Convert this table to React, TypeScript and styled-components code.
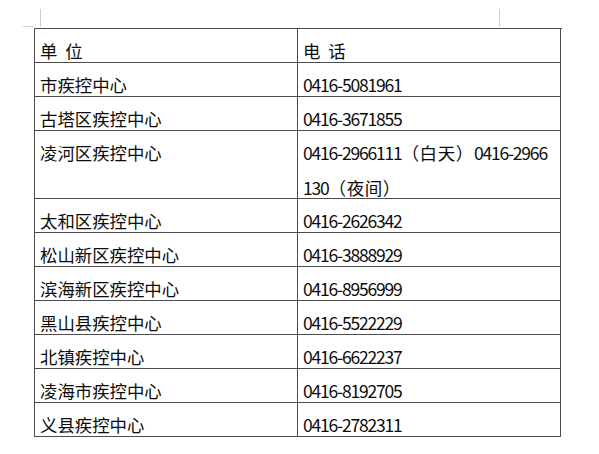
import { Fragment } from 'react';
import styled, { createGlobalStyle } from 'styled-components';

const GlobalStyle = createGlobalStyle`
  html, body {
    margin: 0;
    padding: 0;
    background: #ffffff;
  }
  body {
    font-family: "Noto Sans CJK SC", "Noto Sans", sans-serif;
    color: #0c0c0c;
  }
`;

const Page = styled.div`
  position: relative;
  width: 599px;
  height: 454px;
  padding: 28px 0 0 34px;
  box-sizing: border-box;
`;

const CropMark = styled.div<{ $vertical?: boolean }>`
  position: absolute;
  background: #cfcfcf;
  width: ${(p) => (p.$vertical ? '1px' : '11px')};
  height: ${(p) => (p.$vertical ? '18px' : '1px')};
`;

const Table = styled.div`
  display: grid;
  grid-template-columns: 263px 263px;
  width: 527px;
  border-top: 1px solid #4d4d4d;
  border-left: 1px solid #4d4d4d;
`;

const Cell = styled.div<{ $lines: number; $phone?: boolean }>`
  box-sizing: border-box;
  height: ${(p) => p.$lines * 34}px;
  padding: 4px 5px 0 5px;
  border-right: 1px solid #4d4d4d;
  border-bottom: 1px solid #4d4d4d;
  font-size: ${(p) => (p.$phone ? '17.5px' : '17.4px')};
  letter-spacing: ${(p) => (p.$phone ? '-1.2px' : '0')};
  line-height: 35px;
  white-space: nowrap;
`;

const HeaderText = styled.span`
  word-spacing: 4px;
  letter-spacing: 0;
`;

const Wide = styled.span`
  letter-spacing: 0.6px;
`;

const Line = styled.div``;

interface Row {
  unit: string;
  phone: string[];
}

const rows: Row[] = [
  { unit: '市疾控中心', phone: ['0416-5081961'] },
  { unit: '古塔区疾控中心', phone: ['0416-3671855'] },
  { unit: '凌河区疾控中心', phone: ['0416-2966111（白天）0416-2966', '130（夜间）'] },
  { unit: '太和区疾控中心', phone: ['0416-2626342'] },
  { unit: '松山新区疾控中心', phone: ['0416-3888929'] },
  { unit: '滨海新区疾控中心', phone: ['0416-8956999'] },
  { unit: '黑山县疾控中心', phone: ['0416-5522229'] },
  { unit: '北镇疾控中心', phone: ['0416-6622237'] },
  { unit: '凌海市疾控中心', phone: ['0416-8192705'] },
  { unit: '义县疾控中心', phone: ['0416-2782311'] },
];

// wide (CJK) runs keep their natural width, digit runs are tightened
const renderPhone = (text: string) =>
  text.split(/([（）\u4e00-\u9fff]+)/).map((part, i) =>
    /[（）\u4e00-\u9fff]/.test(part) ? <Wide key={i}>{part}</Wide> : part
  );

export default function App() {
  return (
    <>
      <GlobalStyle />
      <Page>
        <CropMark $vertical style={{ left: 40, top: 9 }} />
        <CropMark style={{ left: 23, top: 26 }} />
        <CropMark $vertical style={{ left: 499, top: 9 }} />
        <Table>
          <Cell $lines={1}>
            <HeaderText>单 位</HeaderText>
          </Cell>
          <Cell $lines={1}>
            <HeaderText>电 话</HeaderText>
          </Cell>
          {rows.map((r) => (
            <Fragment key={r.unit}>
              <Cell $lines={r.phone.length}>{r.unit}</Cell>
              <Cell $lines={r.phone.length} $phone>
                {r.phone.map((l) => (
                  <Line key={l}>{renderPhone(l)}</Line>
                ))}
              </Cell>
            </Fragment>
          ))}
        </Table>
      </Page>
    </>
  );
}
